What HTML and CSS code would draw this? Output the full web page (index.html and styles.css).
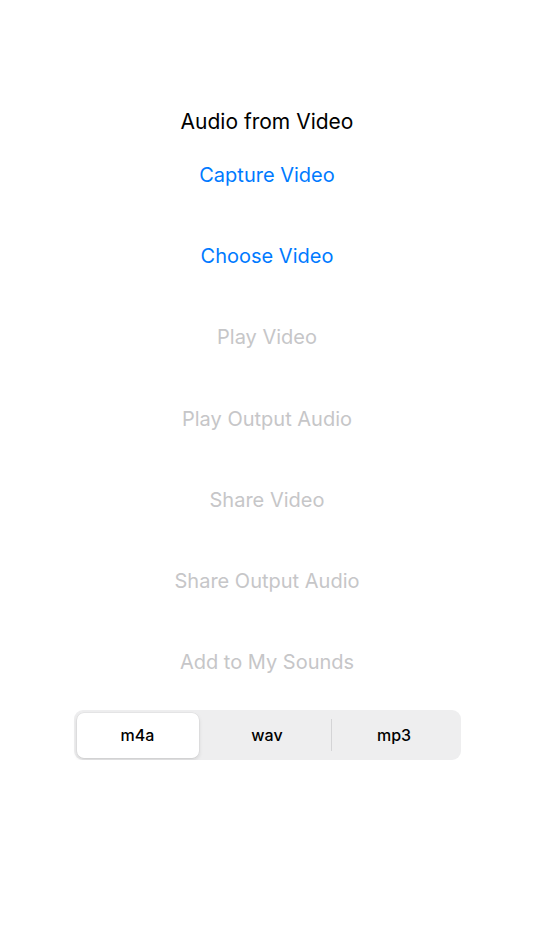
FILE: index.html
```html
<!DOCTYPE html>
<html>
<head>
<meta charset="utf-8">
<link rel="stylesheet" href="styles.css">
</head>
<body>
<main class="screen">
  <h1 class="title">Audio from Video</h1>
  <div class="actions">
    <button class="action enabled">Capture Video</button>
    <button class="action enabled">Choose Video</button>
    <button class="action disabled">Play Video</button>
    <button class="action disabled">Play Output Audio</button>
    <button class="action disabled">Share Video</button>
    <button class="action disabled">Share Output Audio</button>
    <button class="action disabled">Add to My Sounds</button>
  </div>
  <div class="segmented">
    <div class="segment selected">m4a</div>
    <div class="segment">wav</div>
    <div class="segment sep">mp3</div>
  </div>
</main>
</body>
</html>
```
FILE: styles.css
```css
html, body {
  margin: 0;
  padding: 0;
  background: #ffffff;
}
.screen {
  font-family: Inter, "Liberation Sans", sans-serif;
  display: flex;
  flex-direction: column;
  align-items: center;
  padding-top: 110px;
}
.title {
  margin: 0;
  font-size: 21px;
  font-weight: 400;
  line-height: 24px;
  color: #000000;
}
.actions {
  display: flex;
  flex-direction: column;
  width: 100%;
}
.action {
  height: 81.3px;
  border: none;
  background: none;
  font-family: inherit;
  font-size: 20px;
  padding: 0;
  text-align: center;
}
.enabled { color: #007aff; }
.disabled { color: #c6c6c8; }
.segmented {
  margin-top: 6.5px;
  width: 387px;
  height: 50px;
  box-sizing: border-box;
  background: #eeeeef;
  border-radius: 9px;
  padding: 3px 3px 2px 3px;
  display: grid;
  grid-template-columns: 1fr 1fr 1fr;
  align-items: stretch;
}
.segment {
  display: flex;
  align-items: center;
  justify-content: center;
  font-size: 16px;
  font-weight: 500;
  color: #000;
}
.selected {
  margin-right: 5px;
  background: #ffffff;
  border-radius: 7px;
  box-shadow: 0 2px 4px rgba(0,0,0,0.12), 0 0 0 0.5px rgba(0,0,0,0.06);
}
.sep {
  position: relative;
}
.sep::before {
  content: "";
  position: absolute;
  left: 0;
  top: 6px;
  bottom: 7px;
  width: 1px;
  background: #d4d4d6;
}
```
